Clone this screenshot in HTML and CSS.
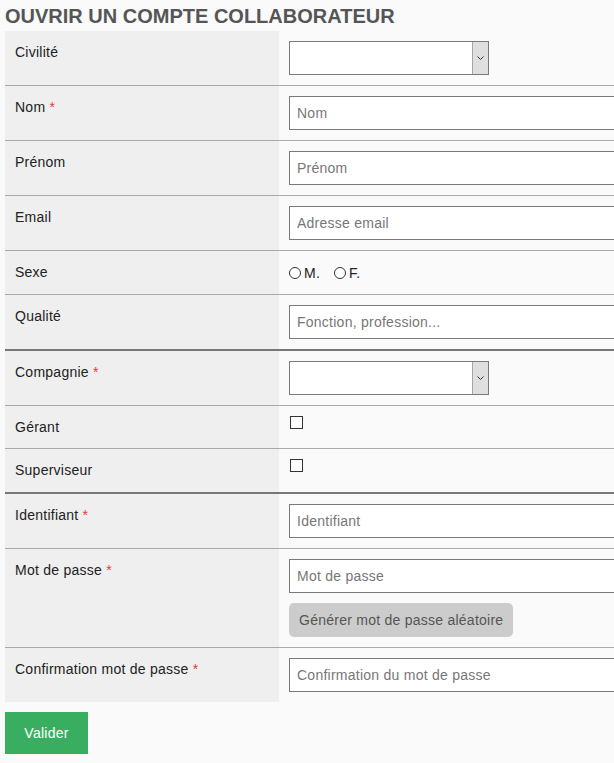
FILE: index.html
```html
<!DOCTYPE html>
<html lang="fr">
<head>
<meta charset="utf-8">
<title>Ouvrir un compte collaborateur</title>
<link rel="stylesheet" href="styles.css">
</head>
<body>
<div class="page">
  <h1 class="title">OUVRIR UN COMPTE COLLABORATEUR</h1>
  <form class="form">
    <div class="row">
      <div class="label">Civilité</div>
      <div class="field">
        <div class="select">
          <select><option></option></select>
          <span class="select-arrow"><svg width="7" height="4" viewBox="0 0 7 4"><path d="M0.5 0.5 L3.5 3.5 L6.5 0.5" fill="none" stroke="#333" stroke-width="1"/></svg></span>
        </div>
      </div>
    </div>
    <div class="row">
      <div class="label">Nom <span class="req">*</span></div>
      <div class="field"><input class="input" type="text" placeholder="Nom"></div>
    </div>
    <div class="row">
      <div class="label">Prénom</div>
      <div class="field"><input class="input" type="text" placeholder="Prénom"></div>
    </div>
    <div class="row">
      <div class="label">Email</div>
      <div class="field"><input class="input" type="text" placeholder="Adresse email"></div>
    </div>
    <div class="row">
      <div class="label">Sexe</div>
      <div class="field">
        <div class="radios">
          <label class="radio"><input type="radio" name="sexe">M.</label>
          <label class="radio"><input type="radio" name="sexe">F.</label>
        </div>
      </div>
    </div>
    <div class="row sep">
      <div class="label">Qualité</div>
      <div class="field"><input class="input" type="text" placeholder="Fonction, profession..."></div>
    </div>
    <div class="row">
      <div class="label">Compagnie <span class="req">*</span></div>
      <div class="field">
        <div class="select">
          <select><option></option></select>
          <span class="select-arrow"><svg width="7" height="4" viewBox="0 0 7 4"><path d="M0.5 0.5 L3.5 3.5 L6.5 0.5" fill="none" stroke="#333" stroke-width="1"/></svg></span>
        </div>
      </div>
    </div>
    <div class="row">
      <div class="label">Gérant</div>
      <div class="field"><input class="check" type="checkbox"></div>
    </div>
    <div class="row sep">
      <div class="label">Superviseur</div>
      <div class="field"><input class="check" type="checkbox"></div>
    </div>
    <div class="row">
      <div class="label">Identifiant <span class="req">*</span></div>
      <div class="field"><input class="input" type="text" placeholder="Identifiant"></div>
    </div>
    <div class="row">
      <div class="label">Mot de passe <span class="req">*</span></div>
      <div class="field stack">
        <input class="input" type="password" placeholder="Mot de passe">
        <button type="button" class="gen">Générer mot de passe aléatoire</button>
      </div>
    </div>
    <div class="row">
      <div class="label">Confirmation mot de passe <span class="req">*</span></div>
      <div class="field"><input class="input" type="password" placeholder="Confirmation du mot de passe"></div>
    </div>
  </form>
  <button type="button" class="submit">Valider</button>
</div>
</body>
</html>
```

FILE: styles.css
```css
html, body {
  margin: 0;
  background: #fafafa;
}
body {
  font-family: "Liberation Sans", Arial, sans-serif;
  font-size: 14px;
  letter-spacing: 0.25px;
  color: #222;
}
.page {
  padding: 5px 0 0 5px;
  overflow: hidden;
}
.title {
  margin: 0 0 3px;
  font-size: 20px;
  line-height: 23px;
  font-weight: bold;
  letter-spacing: 0;
  color: #555;
  white-space: nowrap;
}
.form {
  width: 720px;
}
.row {
  display: grid;
  grid-template-columns: 274px 1fr;
  border-bottom: 1px solid #aaa;
}
.row.sep {
  border-bottom: 2px solid #777;
}
.row.sep .label {
  padding-bottom: 11px;
}
.row:last-child {
  border-bottom: none;
}
.label {
  background: #efefef;
  padding: 10px;
  line-height: 22px;
}
.req {
  color: #e83a3a;
}
.field {
  padding: 10px;
  line-height: 22px;
}
.stack {
  display: flex;
  flex-direction: column;
  align-items: flex-start;
  gap: 10px;
}
.input {
  display: block;
  box-sizing: border-box;
  width: 400px;
  height: 34px;
  margin: 0;
  padding: 0 7px;
  border: 1px solid #7a7a7a;
  border-radius: 0;
  background: #fff;
  font-family: "Liberation Sans", Arial, sans-serif;
  font-size: 14px;
  letter-spacing: 0.25px;
  color: #222;
}
.input::placeholder {
  color: #777;
}
.select {
  position: relative;
  width: 200px;
  height: 34px;
}
.select select {
  display: block;
  appearance: none;
  -webkit-appearance: none;
  box-sizing: border-box;
  width: 200px;
  height: 34px;
  margin: 0;
  border: 1px solid #7a7a7a;
  border-radius: 0;
  background: #fff;
}
.select-arrow {
  position: absolute;
  top: 1px;
  right: 1px;
  bottom: 1px;
  width: 16px;
  box-sizing: border-box;
  background: #dfdfdf;
  border-left: 1px solid #a5a5a5;
  display: flex;
  align-items: center;
  justify-content: center;
  pointer-events: none;
}
.select-arrow svg {
  display: block;
}
.radios {
  display: flex;
  gap: 14px;
  height: 23px;
}
.radio {
  display: flex;
  align-items: center;
  gap: 3px;
}
.radio input {
  appearance: none;
  -webkit-appearance: none;
  width: 12px;
  height: 12px;
  margin: 0;
  border: 1px solid #333;
  border-radius: 50%;
  background: #fff;
}
.check {
  appearance: none;
  -webkit-appearance: none;
  display: block;
  width: 13px;
  height: 13px;
  margin: 0 0 0 1px;
  box-sizing: border-box;
  border: 1px solid #333;
  border-radius: 0;
  background: #fff;
}
.gen {
  height: 34px;
  padding: 0 10px;
  border: none;
  border-radius: 5px;
  background: #cccccc;
  color: #555;
  font-family: "Liberation Sans", Arial, sans-serif;
  font-size: 14px;
  letter-spacing: 0.25px;
}
.submit {
  display: block;
  margin-top: 10px;
  width: 83px;
  height: 42px;
  padding: 0;
  border: none;
  background: #3aae60;
  color: #fff;
  font-family: "Liberation Sans", Arial, sans-serif;
  font-size: 14px;
  letter-spacing: 0.25px;
}
```
